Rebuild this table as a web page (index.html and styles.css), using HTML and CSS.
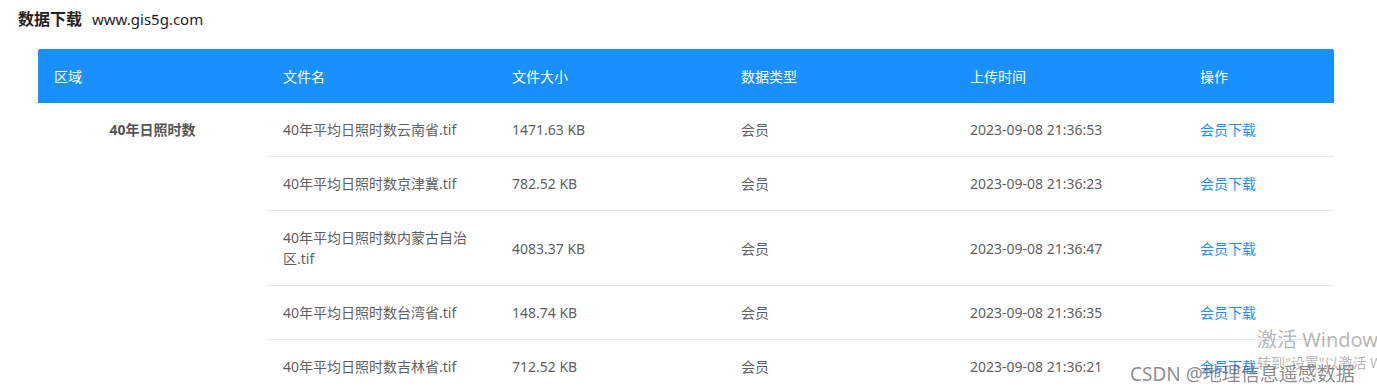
FILE: index.html
```html
<!DOCTYPE html>
<html lang="zh-CN">
  <head>
    <meta charset="UTF-8" />
    <meta name="viewport" content="width=device-width, initial-scale=1.0" />
    <title>数据下载</title>
    <link rel="stylesheet" href="styles.css">
  </head>
  <body>
    <div class="page-title">
      <h3>数据下载</h3>
      <span class="site">www.gis5g.com</span>
    </div>

    <div class="table-wrap">
      <table class="data-table">
        <colgroup>
          <col class="col-region" />
          <col class="col-name" />
          <col class="col-size" />
          <col class="col-type" />
          <col class="col-time" />
          <col class="col-action" />
        </colgroup>
        <thead>
          <tr>
            <th>区域</th>
            <th>文件名</th>
            <th>文件大小</th>
            <th>数据类型</th>
            <th>上传时间</th>
            <th>操作</th>
          </tr>
        </thead>
        <tbody>
          <tr>
            <td class="region" rowspan="5">40年日照时数</td>
            <td>40年平均日照时数云南省.tif</td>
            <td>1471.63 KB</td>
            <td>会员</td>
            <td>2023-09-08 21:36:53</td>
            <td><a href="#">会员下载</a></td>
          </tr>
          <tr>
            <td>40年平均日照时数京津冀.tif</td>
            <td>782.52 KB</td>
            <td>会员</td>
            <td>2023-09-08 21:36:23</td>
            <td><a href="#">会员下载</a></td>
          </tr>
          <tr>
            <td>40年平均日照时数内蒙古自治区.tif</td>
            <td>4083.37 KB</td>
            <td>会员</td>
            <td>2023-09-08 21:36:47</td>
            <td><a href="#">会员下载</a></td>
          </tr>
          <tr>
            <td>40年平均日照时数台湾省.tif</td>
            <td>148.74 KB</td>
            <td>会员</td>
            <td>2023-09-08 21:36:35</td>
            <td><a href="#">会员下载</a></td>
          </tr>
          <tr>
            <td>40年平均日照时数吉林省.tif</td>
            <td>712.52 KB</td>
            <td>会员</td>
            <td>2023-09-08 21:36:21</td>
            <td><a href="#">会员下载</a></td>
          </tr>
        </tbody>
      </table>
    </div>

    <div class="activate">
      <p class="activate-title">激活 Windows</p>
      <p class="activate-sub">转到"设置"以激活 Windows。</p>
    </div>
    <div class="watermark">CSDN @地理信息遥感数据</div>
  </body>
</html>
```

FILE: styles.css
```css
* {
  margin: 0;
  padding: 0;
  box-sizing: border-box;
}

body {
  font-family: "Noto Sans", "Noto Sans CJK SC", sans-serif;
  font-size: 14px;
  color: #5f5f5f;
  background: white;
  overflow: hidden;
}

.page-title {
  display: flex;
  align-items: baseline;
  gap: 10px;
  padding: 6px 18px 0;
  height: 49px;
  color: #222;
}

.page-title h3 {
  font-size: 16px;
  font-weight: bold;
}

.page-title .site {
  font-size: 15px;
}

.table-wrap {
  padding: 0 43px 0 38px;
}

.data-table {
  width: 100%;
  border-collapse: collapse;
  table-layout: fixed;
  line-height: 21px;
}

.col-region,
.col-name,
.col-size,
.col-type {
  width: 229px;
}

.col-time {
  width: 230px;
}

.data-table th {
  background: #1890ff;
  color: white;
  font-weight: normal;
  text-align: left;
  height: 54px;
  padding: 0 16px;
}

.data-table th:first-child {
  border-top-left-radius: 2px;
}

.data-table th:last-child {
  border-top-right-radius: 2px;
}

.data-table td {
  padding: 16px;
  border-bottom: 1px solid #e8e8e8;
  vertical-align: middle;
}

.data-table td.region {
  text-align: center;
  vertical-align: top;
  font-weight: bold;
  color: #555;
  border-bottom: none;
}

.data-table a {
  color: #1890ff;
  text-decoration: none;
}

.activate {
  position: absolute;
  left: 1257px;
  top: 327px;
  color: rgba(120, 120, 120, 0.55);
  white-space: nowrap;
}

.activate-title {
  font-size: 20px;
  line-height: 26px;
}

.activate-sub {
  font-size: 14px;
  line-height: 20px;
}

.watermark {
  position: absolute;
  left: 1130px;
  top: 359px;
  font-size: 19px;
  color: rgba(90, 90, 90, 0.7);
  white-space: nowrap;
}
```
